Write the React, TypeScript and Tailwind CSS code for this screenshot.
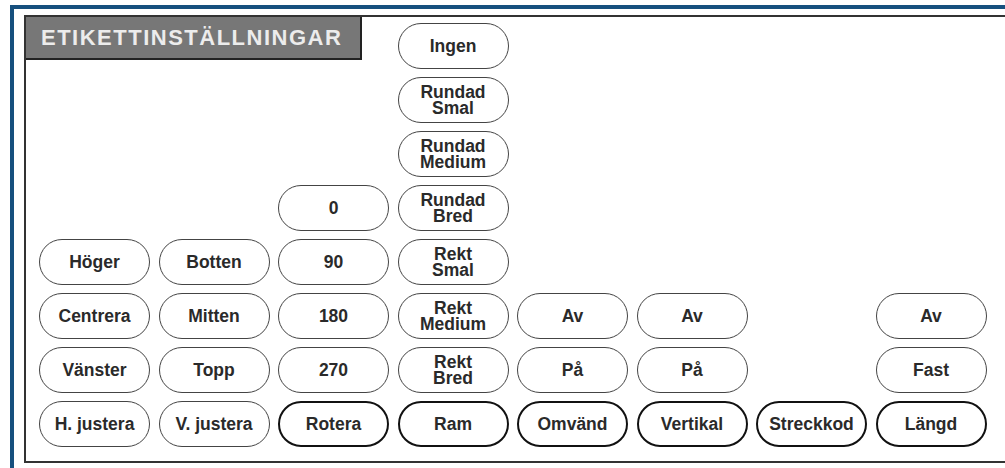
import React from "react";

type Cell = { col: number; row: number; label: string[]; bold?: boolean };

const colStart = ["col-start-1", "col-start-2", "col-start-3", "col-start-4", "col-start-5", "col-start-6", "col-start-7", "col-start-8"];
const rowStart = ["row-start-1", "row-start-2", "row-start-3", "row-start-4", "row-start-5", "row-start-6", "row-start-7", "row-start-8"];

const cells: Cell[] = [
  { col: 4, row: 1, label: ["Ingen"] },
  { col: 4, row: 2, label: ["Rundad", "Smal"] },
  { col: 4, row: 3, label: ["Rundad", "Medium"] },
  { col: 3, row: 4, label: ["0"] },
  { col: 4, row: 4, label: ["Rundad", "Bred"] },
  { col: 1, row: 5, label: ["Höger"] },
  { col: 2, row: 5, label: ["Botten"] },
  { col: 3, row: 5, label: ["90"] },
  { col: 4, row: 5, label: ["Rekt", "Smal"] },
  { col: 1, row: 6, label: ["Centrera"] },
  { col: 2, row: 6, label: ["Mitten"] },
  { col: 3, row: 6, label: ["180"] },
  { col: 4, row: 6, label: ["Rekt", "Medium"] },
  { col: 5, row: 6, label: ["Av"] },
  { col: 6, row: 6, label: ["Av"] },
  { col: 8, row: 6, label: ["Av"] },
  { col: 1, row: 7, label: ["Vänster"] },
  { col: 2, row: 7, label: ["Topp"] },
  { col: 3, row: 7, label: ["270"] },
  { col: 4, row: 7, label: ["Rekt", "Bred"] },
  { col: 5, row: 7, label: ["På"] },
  { col: 6, row: 7, label: ["På"] },
  { col: 8, row: 7, label: ["Fast"] },
  { col: 1, row: 8, label: ["H. justera"] },
  { col: 2, row: 8, label: ["V. justera"] },
  { col: 3, row: 8, label: ["Rotera"], bold: true },
  { col: 4, row: 8, label: ["Ram"], bold: true },
  { col: 5, row: 8, label: ["Omvänd"], bold: true },
  { col: 6, row: 8, label: ["Vertikal"], bold: true },
  { col: 7, row: 8, label: ["Streckkod"], bold: true },
  { col: 8, row: 8, label: ["Längd"], bold: true },
];

const Pill = ({ cell }: { cell: Cell }) => {
  return (
    <div
      className={`${colStart[cell.col - 1]} ${rowStart[cell.row - 1]} flex flex-col items-center justify-center rounded-full bg-white text-[17.5px] font-bold leading-[16px] text-[#2a2a2a] ${
        cell.bold ? "border-[2.5px] border-[#111]" : "border-[1.5px] border-[#444]"
      }`}
    >
      {cell.label.map((l, i) => (
        <span key={i} className="whitespace-nowrap">
          {l}
        </span>
      ))}
    </div>
  );
};

const App = () => {
  return (
    <div className="w-[1005px] h-[468px] overflow-hidden bg-white pl-[10px] pt-[5px] font-['Liberation_Sans',Arial,sans-serif]">
      <div className="h-[470px] w-[1010px] border-l-4 border-t-4 border-[#16507e] pl-[10px] pt-[6px]">
        <div className="h-[448px] w-[990px] border-b-2 border-l-2 border-t-2 border-[#333]">
          <div className="grid grid-cols-[repeat(8,111px)] grid-rows-[repeat(8,46px)] gap-x-[8.5px] gap-y-[8px] pl-[13px] pt-[6px]">
            <div className="col-start-1 col-span-3 row-start-1 -ml-[13px] -mt-[6px] flex h-[43px] w-[336px] items-center self-start justify-self-start border-b-2 border-r-2 border-[#222] bg-[#777] pl-[15px] text-[22px] font-bold tracking-[1.5px] text-[#ececec]">
              ETIKETTINSTÄLLNINGAR
            </div>
            {cells.map((c, i) => (
              <Pill key={i} cell={c} />
            ))}
          </div>
        </div>
      </div>
    </div>
  );
};

export default App;
